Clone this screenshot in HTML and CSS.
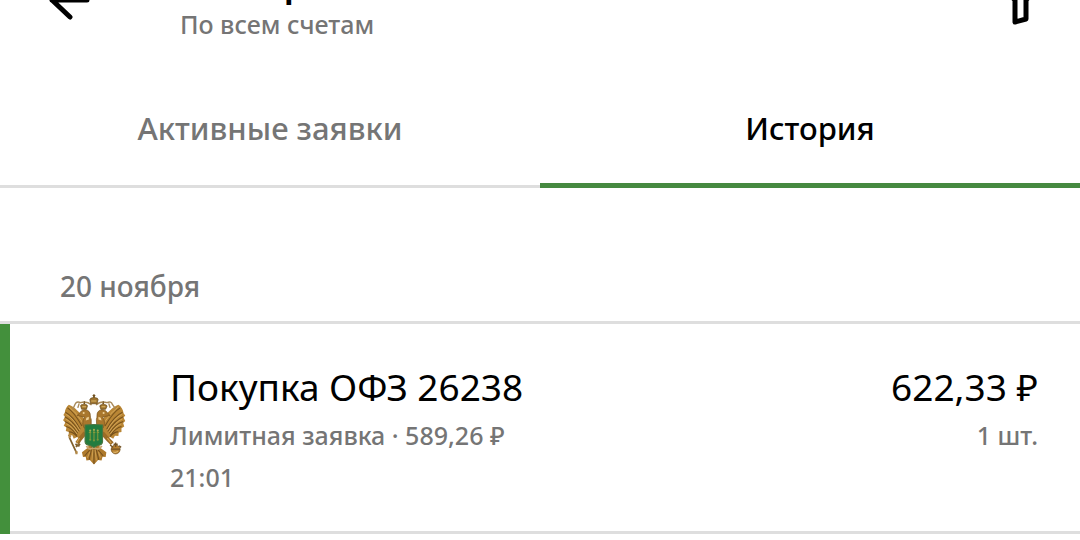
FILE: index.html
```
<!DOCTYPE html>
<html lang="ru">
<head>
    <meta charset="UTF-8">
    <meta name="viewport" content="width=device-width, initial-scale=1.0">
    <title>История заявок</title>
    <link rel="stylesheet" href="styles.css">
</head>
<body>

    <!-- Шапка, прокрученная вверх -->
    <header class="header">
        <button class="icon-button" type="button" aria-label="Назад">
            <svg viewBox="0 0 52 52" fill="none" stroke="#000" stroke-width="5" stroke-linecap="round" stroke-linejoin="round">
                <path d="M43 24H8M26 7L8 24L26 41"/>
            </svg>
        </button>
        <div class="heading">
            <h1>История заявок</h1>
            <p>По всем счетам</p>
        </div>
        <button class="icon-button" type="button" aria-label="Фильтр">
            <svg viewBox="0 0 52 52" fill="none" stroke="#000" stroke-width="5" stroke-linejoin="round">
                <path d="M7 5H45V10L32 24V43L21 46V24L7 10Z"/>
            </svg>
        </button>
    </header>

    <nav class="tabs">
        <button class="tab" type="button">Активные заявки</button>
        <button class="tab active" type="button">История</button>
    </nav>

    <main>
        <h2 class="date">20 ноября</h2>

        <article class="order">
            <!-- Герб -->
            <svg class="emblem" viewBox="38 30 192 212" aria-hidden="true">
                <!-- крылья -->
                <g fill="#b98635">
                    <path d="M103 105C91 88 75 70 58 64C51 69 47 78 46 87L42 94L47 99L41 109L48 115L43 125L51 130L49 140L58 143L57 154L68 153L72 163L82 158L90 164L110 145Z"/>
                    <path d="M157 105C169 88 185 70 202 64C211 69 216 79 217 89L222 95L217 101L222 111L216 117L219 127L211 132L211 143L203 145L202 155L192 154L187 163L178 158L169 164L150 145Z"/>
                </g>
                <g fill="none" stroke="#76511c" stroke-width="3">
                    <path d="M54 73Q74 86 96 126M48 86Q70 97 91 135M46 99Q67 108 88 142M46 113Q65 119 84 147M50 127Q66 131 82 153M58 143Q70 142 82 157"/>
                    <path d="M207 73Q186 86 163 126M214 86Q190 97 168 135M216 99Q193 108 171 142M216 113Q195 119 175 147M211 127Q195 131 178 153M202 143Q190 142 178 157"/>
                </g>
                <g fill="none" stroke="#dfb567" stroke-width="2">
                    <path d="M58 70Q79 85 99 117M50 92Q71 103 90 138M49 106Q67 113 86 144M51 120Q66 124 82 150"/>
                    <path d="M202 70Q180 85 160 117M212 92Q189 103 170 138M213 106Q194 113 174 144M210 120Q195 124 178 150"/>
                </g>
                <!-- шеи и головы -->
                <g fill="#a9772d" stroke="#77511c" stroke-width="2">
                    <path d="M123 128L103 132C95 119 99 108 104 100L96 98L82 95L90 88C94 78 108 75 116 83C123 90 118 98 123 107Z"/>
                    <path d="M139 128L157 132C165 119 161 108 156 100L164 98L178 95L170 88C166 78 152 75 144 83C137 90 142 98 138 107Z"/>
                </g>
                <g fill="#efd197">
                    <circle cx="101" cy="88" r="3"/>
                    <circle cx="159" cy="88" r="3"/>
                    <path d="M109 102L116 99L116 107L107 110ZM151 102L144 99L144 107L153 110Z"/>
                </g>
                <!-- короны и ленты -->
                <path d="M124 65Q110 52 92 58Q79 52 75 65L69 78M88 60L84 73M137 65Q150 52 169 58Q181 52 185 64L194 76M174 60L178 73" fill="none" stroke="#a88958" stroke-width="4"/>
                <g fill="#9d732f" stroke="#654719" stroke-width="2">
                    <path d="M121 61L119 49Q121 43 127 44L131 38L135 44Q142 43 143 49L140 61Z"/>
                    <path d="M95 77L92 67Q94 62 99 64L103 59L107 64Q112 63 112 68L109 77Z"/>
                    <path d="M151 77L148 68Q149 63 154 64L158 59L162 64Q168 63 169 68L165 77Z"/>
                </g>
                <path d="M131 33V44M127 37H135M103 54V62M158 54V62" stroke="#70501f" stroke-width="3"/>
                <path d="M123 53L138 53M97 70H108M153 70H164" stroke="#e0b969" stroke-width="3"/>
                <!-- лапы, скипетр и держава -->
                <path d="M105 146L90 164L82 176M155 146L171 164L184 177" fill="none" stroke="#9c6c27" stroke-width="12"/>
                <path d="M89 161L81 174M170 161L181 175" stroke="#d8a64e" stroke-width="3"/>
                <path d="M59 158L80 203M77 178L89 185M78 186L91 178" stroke="#80602d" stroke-width="5"/>
                <path d="M55 152L62 149L65 157L59 162ZM76 197L84 200L83 208L77 208Z" fill="#b48b4a"/>
                <circle cx="194" cy="194" r="13" fill="#b88130" stroke="#755120" stroke-width="2"/>
                <path d="M181 193H207M194 174V187M188 179H200M178 181L187 188M204 183L210 188" stroke="#725225" stroke-width="4"/>
                <path d="M187 201Q194 205 201 199" fill="none" stroke="#dfb76d" stroke-width="3"/>
                <!-- хвост -->
                <path d="M119 151L114 188L96 202L99 216L107 215L109 226L119 225L131 238L143 225L153 226L156 215L165 216L167 202L148 188L142 151Z" fill="#ae7a2c"/>
                <path d="M131 188V236M125 188L117 224M136 188L145 224M119 195L104 213M143 195L158 213" stroke="#74501f" stroke-width="3"/>
                <path d="M128 194L125 226M134 194L138 226M119 201L112 218M144 201L150 218" stroke="#ddb162" stroke-width="2"/>
                <path d="M109 184Q118 199 131 187Q143 199 154 184" fill="none" stroke="#c9a36b" stroke-width="5"/>
                <!-- щит -->
                <path d="M105 123Q131 120 156 123V172Q155 181 143 182L131 188L119 182Q106 181 105 172Z" fill="#237c3f" stroke="#4d7540" stroke-width="3"/>
                <path d="M120 140V169M131 138V171M142 140V169M116 145H123M128 145H135M139 145H146M117 166H123M128 167H134M139 166H145" stroke="#849a3c" stroke-width="3"/>
                <g fill="#a7ad51">
                    <circle cx="120" cy="139" r="3"/>
                    <circle cx="131" cy="137" r="3"/>
                    <circle cx="142" cy="139" r="3"/>
                </g>
            </svg>
            <div class="info">
                <h3>Покупка ОФЗ 26238</h3>
                <p>Лимитная заявка · 589,26 ₽</p>
                <p>21:01</p>
            </div>
            <div class="amount">
                <strong>622,33 ₽</strong>
                <p>1 шт.</p>
            </div>
        </article>
    </main>

</body>
</html>
```
FILE: styles.css
```
/* Общие стили */
* {
    box-sizing: border-box;
}

body {
    margin: 0;
    background: #fff;
    color: #000;
    font-family: "Noto Sans", sans-serif;
}

h1, h2, h3, p {
    margin: 0;
    font-weight: 400;
}

button {
    border: none;
    background: none;
    padding: 0;
    font-family: inherit;
    cursor: pointer;
}

/* Шапка */
.header {
    display: flex;
    align-items: flex-start;
    margin-top: -48px;
    padding: 0 34px 28px 44px;
}

.icon-button {
    width: 52px;
    height: 52px;
    margin-top: 24px;
}

.icon-button svg {
    display: block;
    width: 100%;
}

.heading {
    flex: 1;
    padding-left: 84px;
}

.heading h1 {
    font-size: 44px;
    font-weight: 500;
    line-height: 52px;
}

.heading p {
    color: #757575;
    font-size: 25px;
    font-weight: 500;
    line-height: 40px;
}

/* Вкладки */
.tabs {
    display: flex;
    align-items: stretch;
}

.tab {
    flex: 1;
    padding: 34px 0 35px;
    border-bottom: 3px solid #dedede;
    color: #757575;
    font-size: 31px;
    font-weight: 500;
    line-height: 44px;
}

.tab.active {
    padding-bottom: 33px;
    border-bottom: 5px solid #468940;
    color: #000;
}

/* Дата */
.date {
    padding: 78px 60px 15px;
    border-bottom: 3px solid #dedede;
    color: #757575;
    font-size: 28px;
    font-weight: 500;
    line-height: 40px;
}

/* Заявка */
.order {
    display: flex;
    align-items: center;
    padding-right: 42px;
    border-bottom: 3px solid #dedede;
}

.order::before {
    content: "";
    align-self: stretch;
    width: 10px;
    margin-bottom: -3px;
    background: #43903c;
}

.emblem {
    width: 66px;
    height: 73px;
    margin: 4px 42px 0 52px;
}

.info {
    flex: 1;
    padding: 36px 0 33px;
}

.info h3, .amount strong {
    display: block;
    font-size: 37px;
    font-weight: 400;
    line-height: 54px;
}

.info p, .amount p {
    color: #757575;
    font-size: 25px;
    font-weight: 500;
    line-height: 42px;
}

.amount {
    align-self: flex-start;
    padding-top: 36px;
    text-align: right;
}
```
